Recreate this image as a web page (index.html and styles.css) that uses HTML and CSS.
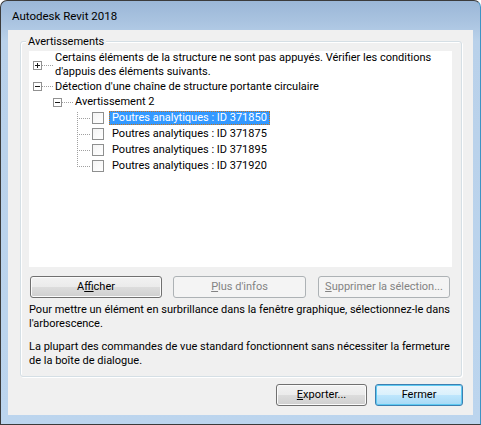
FILE: index.html
```html
<!DOCTYPE html>
<html lang="fr">
<head>
<meta charset="utf-8">
<title>Autodesk Revit 2018</title>
<link rel="stylesheet" href="styles.css">
</head>
<body>
<div class="window">
  <div class="titlebar"><span class="title">Autodesk Revit 2018</span></div>
  <div class="client">
    <div class="group">
      <span class="legend">Avertissements</span>
      <div class="tree">
        <div class="node two">
          <svg class="exp" width="9" height="9" viewBox="0 0 9 9"><rect x="0.5" y="0.5" width="8" height="8" fill="#fff" stroke="#919191"/><path d="M2 4.5h5M4.5 2v5" stroke="#1a1a1a"/></svg>
          <span class="hl"></span>
          <span class="label">Certains éléments de la structure ne sont pas appuyés. Vérifier les conditions<br>d'appuis des éléments suivants.</span>
        </div>
        <div class="node r2">
          <svg class="exp" width="9" height="9" viewBox="0 0 9 9"><rect x="0.5" y="0.5" width="8" height="8" fill="#fff" stroke="#919191"/><path d="M2 4.5h5" stroke="#1a1a1a"/></svg>
          <span class="hl"></span>
          <span class="label">Détection d'une chaîne de structure portante circulaire</span>
        </div>
        <div class="node r3">
          <svg class="exp" width="9" height="9" viewBox="0 0 9 9"><rect x="0.5" y="0.5" width="8" height="8" fill="#fff" stroke="#919191"/><path d="M2 4.5h5" stroke="#1a1a1a"/></svg>
          <span class="hl"></span>
          <span class="label">Avertissement 2</span>
        </div>
        <div class="leaf first"><span class="conn"></span><span class="chk"></span><span class="label sel">Poutres analytiques : ID 371850</span></div>
        <div class="leaf"><span class="conn"></span><span class="chk"></span><span class="label">Poutres analytiques : ID 371875</span></div>
        <div class="leaf"><span class="conn"></span><span class="chk"></span><span class="label">Poutres analytiques : ID 371895</span></div>
        <div class="leaf last"><span class="conn"></span><span class="chk"></span><span class="label">Poutres analytiques : ID 371920</span></div>
      </div>
      <div class="btnrow">
        <button class="btn b-show">A<u>f</u>ficher</button>
        <button class="btn b-more" disabled><u>P</u>lus d'infos</button>
        <button class="btn b-del" disabled><u>S</u>upprimer la sélection...</button>
      </div>
      <p class="info">Pour mettre un élément en surbrillance dans la fenêtre graphique, sélectionnez-le dans<br>l'arborescence.</p>
      <p class="info second">La plupart des commandes de vue standard fonctionnent sans nécessiter la fermeture<br>de la boîte de dialogue.</p>
    </div>
    <div class="footer">
      <button class="btn b-export"><u>E</u>xporter...</button>
      <button class="btn b-close default">Fermer</button>
    </div>
  </div>
</div>
</body>
</html>
```

FILE: styles.css
```css
* { box-sizing: border-box; }
html, body { margin: 0; padding: 0; background: #ffffff; }
body {
  font-family: Roboto, "Liberation Sans", Arial, sans-serif;
  font-size: 11px;
  color: #000;
}
.window {
  width: 481px;
  height: 425px;
  border: 1px solid #3b3b3b;
  border-right-color: #3f93c4;
  border-radius: 7px 7px 0 0;
  background: linear-gradient(#9bb7d7 0px, #a9c3e0 20px, #b9d1ea 40px, #bcd5ee 100%);
  padding: 0 7px 9px;
  display: flex;
  flex-direction: column;
  overflow: hidden;
}
.titlebar {
  height: 29px;
  padding: 7px 0 0 4px;
  line-height: 16px;
  flex: none;
}
.title { color: #000; font-size: 11.5px; }
.client {
  flex: 1;
  background: #f0f0f0;
  display: flex;
  flex-direction: column;
}
.group {
  position: relative;
  margin: 11px 11px 0 12px;
  border: 1px solid #d5dfe5;
  border-radius: 3px;
  box-shadow: inset 1px 1px 0 #fff, 1px 1px 0 #fff;
  padding: 9px 9px 8px 8px;
}
.legend {
  position: absolute;
  top: -8px;
  left: 5px;
  padding: 0 2px;
  line-height: 15px;
  background: #f0f0f0;
}
.tree {
  height: 216px;
  background: #fff;
  padding-left: 4px;
}
.node {
  display: flex;
  align-items: center;
  height: 16px;
}
.node.two { height: 28px; line-height: 14px; }
.node.r2 { height: 15px; }
.node.r3 { padding-left: 20px; }
.exp { flex: none; display: block; }
.hl {
  flex: none;
  width: 11px;
  height: 1px;
  background: repeating-linear-gradient(to right, #a0a0a0 0 1px, transparent 1px 2px);
}
.label {
  white-space: nowrap;
  padding: 0 2px;
  line-height: 14px;
}
.leaf {
  display: flex;
  align-items: center;
  height: 16px;
  padding-left: 44px;
}
.conn {
  flex: none;
  width: 13px;
  height: 16px;
  background:
    repeating-linear-gradient(to bottom, #a0a0a0 0 1px, transparent 1px 2px) 0 0 / 1px 100% no-repeat,
    repeating-linear-gradient(to right, #a0a0a0 0 1px, transparent 1px 2px) 0 8px / 13px 1px no-repeat;
}
.leaf.first .conn {
  background:
    repeating-linear-gradient(to bottom, #a0a0a0 0 1px, transparent 1px 2px) 0 2px / 1px 14px no-repeat,
    repeating-linear-gradient(to right, #a0a0a0 0 1px, transparent 1px 2px) 0 8px / 13px 1px no-repeat;
}
.leaf.last .conn {
  background:
    repeating-linear-gradient(to bottom, #a0a0a0 0 1px, transparent 1px 2px) 0 0 / 1px 9px no-repeat,
    repeating-linear-gradient(to right, #a0a0a0 0 1px, transparent 1px 2px) 0 8px / 13px 1px no-repeat;
}
.chk {
  flex: none;
  width: 12px;
  height: 12px;
  margin-left: 2px;
  margin-right: 5px;
  border: 1px solid #8e8f8f;
  background: linear-gradient(135deg, #f4f4f4, #ffffff);
}
.leaf .label { padding: 0 3px 0 3px; }
.label.sel {
  background: #3399ff;
  color: #fff;
  outline: 1px dotted #c8741a;
  outline-offset: -1px;
}
.btnrow {
  display: flex;
  margin-top: 9px;
  height: 22px;
}
.btn {
  font-family: inherit;
  font-size: 11px;
  height: 22px;
  padding: 0;
  border: 1px solid #707070;
  border-radius: 3px;
  color: #000;
  background: linear-gradient(#f2f2f2 0%, #ebebeb 50%, #dddddd 50%, #cfcfcf 100%);
  box-shadow: inset 0 0 0 1px #fbfbfb;
  line-height: 18px;
}
.btn u { text-decoration: underline; text-underline-offset: 1px; }
.btn:disabled {
  border-color: #adb2b5;
  background: #f4f4f4;
  color: #838383;
  box-shadow: none;
}
.b-show { width: 132px; margin-left: 1px; }
.b-more { width: 133px; margin-left: 11px; }
.b-del { width: 132px; margin-left: 12px; }
.info {
  margin: 5px 0 0 0;
  line-height: 14px;
  white-space: nowrap;
}
.info.second { margin-top: 9px; }
.footer {
  display: flex;
  justify-content: flex-end;
  gap: 8px;
  margin: 7px 10px 0 0;
}
.b-export { width: 91px; }
.b-close { width: 88px; }
.btn.default {
  border-color: #3c7fb1;
  background: linear-gradient(#eaf6fd 0%, #d9f0fc 50%, #bee6fd 50%, #a7d9f5 100%);
  box-shadow: inset 0 0 0 1px #5fcaf2;
}
```
